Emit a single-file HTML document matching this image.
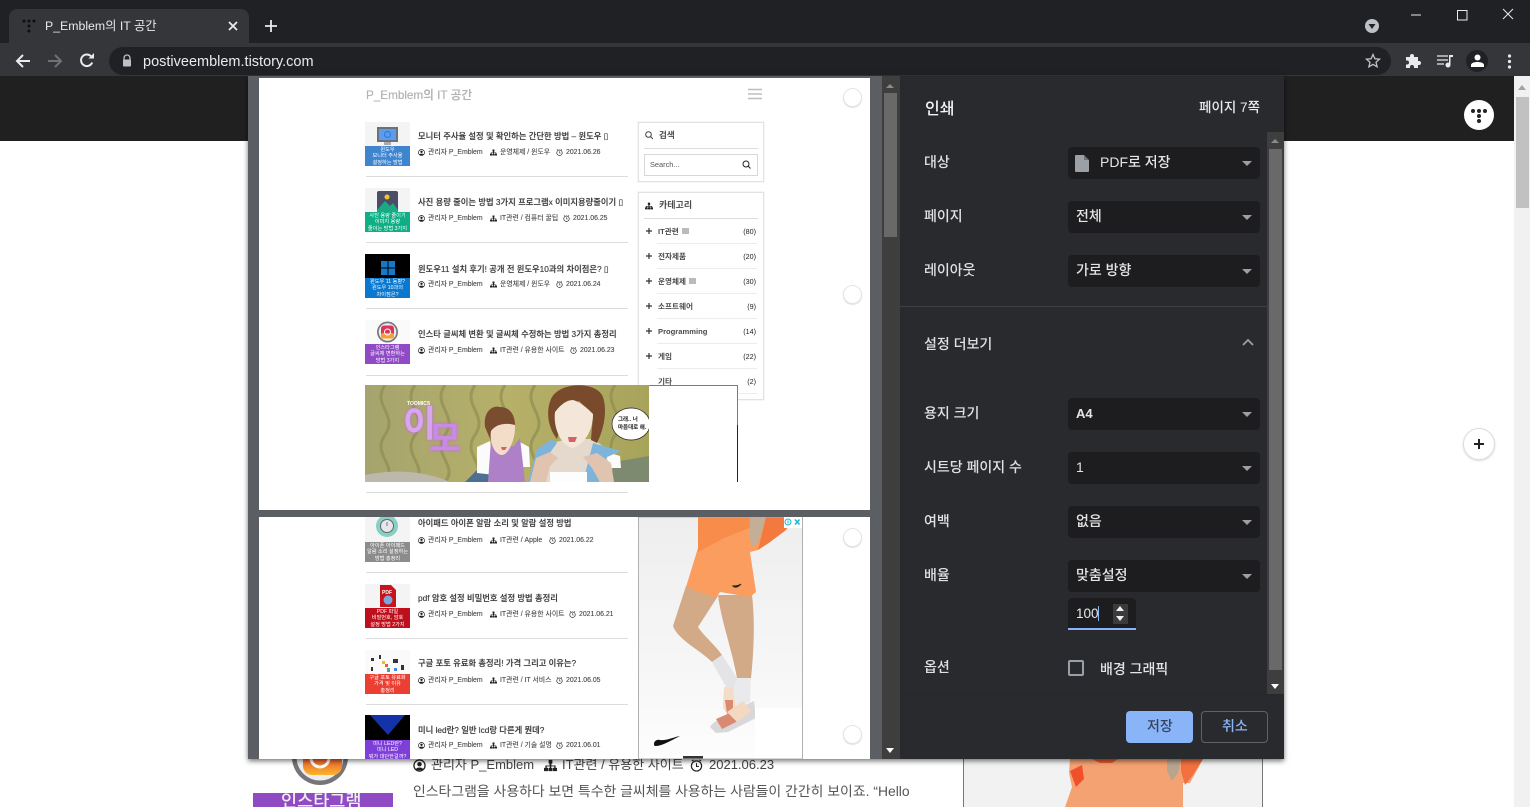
<!DOCTYPE html>
<html lang="ko"><head><meta charset="utf-8"><title>P_Emblem의 IT 공간</title>
<style>
html,body{margin:0;padding:0;width:1530px;height:807px;overflow:hidden;background:#fff}
body{position:relative;font-family:"Liberation Sans","Noto Sans CJK KR",sans-serif}
div,span,svg{position:absolute}
.t{white-space:nowrap;line-height:1}
.pt{font-size:8.3px;color:#3c3c3c;font-weight:500;height:10px;line-height:10px;left:418px;text-shadow:0 0 .5px #666}
.m{font-size:6.9px;color:#4a4a4a;height:8px;line-height:8px;margin-top:1px;text-shadow:0 0 .4px #888}
.mi{width:7px;height:7px;margin-top:1px}
.hr{background:#dcdcdc;height:1px;left:366px;width:262px}
.th{left:365px;width:45px;overflow:hidden;background:#f4f4f4}
.cap{left:0;width:45px;height:20px;color:#fff;font-size:5.200px;line-height:6.300px;text-align:center;padding-top:1px;box-sizing:border-box;white-space:nowrap}
.ci{font-size:7.600px;color:#4a4a4a;font-weight:700;left:658px;height:10px;line-height:10px;white-space:nowrap;margin-top:1px}
.cn{font-size:7.200px;color:#222;height:10px;line-height:10px;right:774px;white-space:nowrap;margin-top:1px}
.cl{left:657px;width:100px;height:1px;background:#ececec}
.pl{left:646px;width:6px;height:6px}
.rd{width:17px;height:17px;border-radius:50%;background:#fff;border:1px solid #e4e4e4;box-shadow:0 1px 1px rgba(0,0,0,.12)}
.lb{left:924px;font-size:14px;color:#e0e1e3;height:18px;line-height:18px;white-space:nowrap;margin-top:1px;font-weight:500}
.sel{left:1068px;width:192px;height:32px;background:#1d1d1f;border-radius:4px}
.sel b{position:absolute;left:8px;top:6px;font-weight:500;font-size:14px;color:#e3e4e6;line-height:18px;white-space:nowrap}
.sel i{position:absolute;left:174px;top:14px;width:0;height:0;border-left:5px solid transparent;border-right:5px solid transparent;border-top:5px solid #9aa0a6}
</style></head><body>

<svg width="0" height="0" style="position:absolute"><defs>
<symbol id="u" viewBox="0 0 14 14"><circle cx="7" cy="7" r="6" fill="none" stroke="#222" stroke-width="1.400"/><circle cx="7" cy="5.600" r="2.400" fill="#222"/><path d="M3 11c1-2.400 7-2.400 8 0v1H3z" fill="#222"/></symbol>
<symbol id="h" viewBox="0 0 14 14"><path d="M5 1h4v4H8v2h4.500v2.500H14V13H9.500V9.500H11V8H7.800v1.500H9V13H5V9.500h1.200V8H3v1.500h1.500V13H0V9.500h1.500V7H6V5H5z" fill="#222"/></symbol>
<symbol id="c" viewBox="0 0 14 14"><circle cx="7" cy="7.500" r="5.500" fill="none" stroke="#222" stroke-width="1.300"/><path d="M7 4.500V8h2.500M2 2l2-1M12 2l-2-1" fill="none" stroke="#222" stroke-width="1.100"/></symbol>
<symbol id="p" viewBox="0 0 6 6"><path d="M3 0v6M0 3h6" stroke="#333" stroke-width="1.200"/></symbol>
</defs></svg>

<!-- page behind -->
<div style="left:0;top:76px;width:1514px;height:65px;background:#202020"></div>
<div style="left:1514px;top:76px;width:16px;height:731px;background:#f1f1f1"></div>
<div style="left:1516px;top:97px;width:13px;height:111px;background:#c1c1c1"></div>
<div style="left:1518px;top:85px;width:0;height:0;border-left:4px solid transparent;border-right:4px solid transparent;border-bottom:5px solid #a3a3a3"></div>
<div style="left:1464px;top:100px;width:30px;height:30px;border-radius:50%;background:#fff"></div>
<svg style="left:1464px;top:100px" width="30" height="30"><g fill="#222"><circle cx="9" cy="11" r="2"/><circle cx="15" cy="11" r="2"/><circle cx="21" cy="11" r="2"/><circle cx="15" cy="16" r="2"/><circle cx="15" cy="21" r="2"/></g></svg>
<div style="left:1463px;top:428px;width:30px;height:30px;border-radius:50%;background:#fff;border:1px solid #ddd;box-shadow:0 1px 2px rgba(0,0,0,.15)"></div>
<svg style="left:1473px;top:438px" width="12" height="12"><path d="M6 1v10M1 6h10" stroke="#222" stroke-width="2"/></svg>

<!-- behind-dialog content -->
<svg style="left:285px;top:755px" width="70" height="38"><defs><linearGradient id="ig" x1="0" y1="0" x2="0" y2="1"><stop offset="0" stop-color="#b0328a"/><stop offset=".45" stop-color="#e8402f"/><stop offset="1" stop-color="#f9b62c"/></linearGradient></defs><circle cx="35" cy="2" r="28" fill="#75757b"/><circle cx="35" cy="2" r="23.500" fill="#ededed"/><rect x="18" y="-20" width="39" height="40" rx="9" fill="url(#ig)"/><circle cx="35" cy="3" r="9" fill="none" stroke="#fff" stroke-width="3"/></svg>
<div style="left:253px;top:793px;width:140px;height:14px;background:#8f4ac4;overflow:hidden"><span class="t" style="left:28px;top:0;font-size:17.500px;color:#eee;font-weight:500">인스타그램</span></div>
<svg style="left:413px;top:759px;width:13px;height:13px"><use href="#u"/></svg>
<span class="t" style="left:431px;top:758px;font-size:13px;color:#444">관리자 P_Emblem</span>
<svg style="left:544px;top:759px;width:13px;height:13px"><use href="#h"/></svg>
<span class="t" style="left:562px;top:758px;font-size:13px;color:#444">IT관련 / 유용한 사이트</span>
<svg style="left:690px;top:759px;width:13px;height:13px"><use href="#c"/></svg>
<span class="t" style="left:709px;top:758px;font-size:13px;color:#444">2021.06.23</span>
<span class="t" style="left:413px;top:785px;font-size:13.900px;color:#555">인스타그램을 사용하다 보면 특수한 글씨체를 사용하는 사람들이 간간히 보이죠. “Hello</span>
<div style="left:963px;top:755px;width:298px;height:60px;background:#f2f2f2;border-left:1px solid #777;border-right:1px solid #777"></div>
<svg style="left:1050px;top:759px" width="220" height="48"><path d="M20 0H153L140 24 133 24 133 48H15L22 28 19 14z" fill="#f5a272"/><path d="M20 12l12-6 2 14-8 8z" fill="#f0502a"/><path d="M117 0h14l-3 14-6 8-5-10z" fill="#b8a48f"/><path d="M131 0h22l-10 16-8 10-4-14z" fill="#f2713f"/><path d="M42 0h26l-6 4H50z" fill="#e85c30"/></svg>

<!-- top chrome -->
<div style="left:0;top:0;width:1530px;height:43px;background:#202124"></div>
<div style="left:0;top:43px;width:1530px;height:33px;background:#35363a"></div>
<div style="left:9px;top:9px;width:240px;height:34px;background:#35363a;border-radius:8px 8px 0 0"></div>
<svg style="left:21px;top:17px" width="16" height="16"><g fill="#0e0e0e"><circle cx="3" cy="4" r="1.500"/><circle cx="8" cy="4" r="1.500"/><circle cx="13" cy="4" r="1.500"/><circle cx="8" cy="9" r="1.500"/><circle cx="8" cy="14" r="1.500"/></g></svg>
<span class="t" style="left:45px;top:20px;font-size:12.300px;color:#e8eaed">P_Emblem의 IT 공간</span>
<svg style="left:227px;top:20px" width="12" height="12"><path d="M2 2l8 8M10 2l-8 8" stroke="#e8eaed" stroke-width="1.800"/></svg>
<svg style="left:264px;top:19px" width="14" height="14"><path d="M7 1v12M1 7h12" stroke="#e8eaed" stroke-width="1.800"/></svg>
<svg style="left:1365px;top:19px" width="14" height="14"><circle cx="7" cy="7" r="7" fill="#bdc1c6"/><path d="M3.500 5h7L7 10z" fill="#202124"/></svg>
<svg style="left:1405px;top:4px" width="115" height="22"><path d="M6 11h10" stroke="#e8eaed" stroke-width="1"/><path d="M52.500 6.500h9.500v9.500h-9.500z" fill="none" stroke="#e8eaed" stroke-width="1"/><path d="M98 5l10 10M108 5L98 15" stroke="#e8eaed" stroke-width="1"/></svg>

<svg style="left:14px;top:52px" width="18" height="18"><path d="M16 9H3M9 3L3 9l6 6" fill="none" stroke="#e8eaed" stroke-width="2"/></svg>
<svg style="left:46px;top:52px" width="18" height="18"><path d="M2 9h13M9 3l6 6-6 6" fill="none" stroke="#6f7175" stroke-width="2"/></svg>
<svg style="left:79px;top:52px" width="16" height="16"><path d="M13.200 10.500A5.800 5.800 0 1 1 12 4.200" fill="none" stroke="#e8eaed" stroke-width="2"/><path d="M9.500 6.500H15V1z" fill="#e8eaed"/></svg>
<div style="left:109px;top:47px;width:1282px;height:28px;border-radius:14px;background:#202124"></div>
<svg style="left:122px;top:54px" width="10" height="13"><path d="M2 6V4a3 3 0 0 1 6 0v2" fill="none" stroke="#bdc1c6" stroke-width="1.300"/><rect x="1" y="5.500" width="8" height="7" rx="1" fill="#bdc1c6"/></svg>
<span class="t" style="left:143px;top:55px;font-size:14.500px;color:#e8eaed">postiveemblem.tistory.com</span>
<svg style="left:1365px;top:53px" width="16" height="16"><path d="M8 1.500l1.900 4.300 4.600.4-3.500 3 1.100 4.600L8 11.400l-4.100 2.400L5 9.200l-3.500-3 4.600-.4z" fill="none" stroke="#bdc1c6" stroke-width="1.300"/></svg>
<svg style="left:1405px;top:53px" width="16" height="16"><path d="M1 4h4V3a2 2 0 0 1 4 0v1h4v4h1a2 2 0 0 1 0 4h-1v3H9v-1a2 2 0 0 0-4 0v1H1v-3.500h1a2 2 0 0 0 0-4H1z" fill="#e8eaed"/></svg>
<svg style="left:1437px;top:54px" width="16" height="14"><path d="M0 2h11M0 6h11M0 10h7" stroke="#e8eaed" stroke-width="1.300"/><path d="M12 1h4v2h-2.500v8a2.500 2.500 0 1 1-1.500-2.300z" fill="#e8eaed"/></svg>
<div style="left:1466px;top:50px;width:22px;height:22px;border-radius:50%;background:#202124"></div>
<svg style="left:1471px;top:54px" width="13" height="14"><circle cx="6.500" cy="3.500" r="3" fill="#fff"/><path d="M0 13v-2c0-4 13-4 13 0v2z" fill="#fff"/></svg>
<svg style="left:1507px;top:54px" width="5" height="15"><g fill="#e8eaed"><circle cx="2.500" cy="2" r="1.600"/><circle cx="2.500" cy="7.500" r="1.600"/><circle cx="2.500" cy="13" r="1.600"/></g></svg>

<!-- dialog -->
<div style="left:248px;top:76px;width:1036px;height:683px;background:#5b5e63;box-shadow:0 2px 5px rgba(0,0,0,.55);overflow:hidden"></div>

<!-- page 1 -->
<div style="left:259px;top:78px;width:611px;height:432px;background:#fff"></div>
<span class="t" style="left:366px;top:90px;font-size:11.700px;color:#b4b4b4;font-weight:500;text-shadow:0 0 .4px #aaa">P_Emblem의 IT 공간</span>
<svg style="left:748px;top:88px" width="14" height="12"><path d="M0 1.500h14M0 6h14M0 10.500h14" stroke="#bdbdbd" stroke-width="1.400"/></svg>

<div class="th" style="top:122px;height:44px"><svg style="left:0;top:0" width="45" height="24"><rect x="12" y="5" width="21" height="15" fill="#6b7178"/><rect x="14" y="7" width="17" height="11" fill="#5b9bf0"/><circle cx="22.500" cy="12.500" r="3" fill="none" stroke="#2f78d0"/><rect x="19" y="20" width="7" height="3" fill="#aaa"/></svg><div class="cap" style="top:24px;background:#3f84cf">윈도우<br>모니터 주사율<br>설정하는 방법</div></div>
<span class="t pt" style="top:131px">모니터 주사율 설정 및 확인하는 간단한 방법 – 윈도우 ▯</span>
<svg class="mi" style="left:418px;top:148px"><use href="#u"/></svg><span class="t m" style="left:428px;top:148px">관리자 P_Emblem</span>
<svg class="mi" style="left:490px;top:148px"><use href="#h"/></svg><span class="t m" style="left:500px;top:148px">운영체제 / 윈도우</span>
<svg class="mi" style="left:556px;top:148px"><use href="#c"/></svg><span class="t m" style="left:566px;top:148px">2021.06.26</span>
<div class="hr" style="top:176px"></div>

<div class="th" style="top:188px;height:44px"><svg style="left:0;top:0" width="45" height="24"><rect x="12" y="3" width="21" height="21" rx="2" fill="#4a4f66"/><circle cx="22" cy="9" r="2.500" fill="#f5c330"/><path d="M12 22l8-9 5 5 3-3 5 7v2H12z" fill="#19a985"/></svg><div class="cap" style="top:24px;background:#0fae85">사진 용량 줄이기<br>이미지 용량<br>줄이는 방법 3가지</div></div>
<span class="t pt" style="top:197px">사진 용량 줄이는 방법 3가지 프로그램x 이미지용량줄이기 ▯</span>
<svg class="mi" style="left:418px;top:214px"><use href="#u"/></svg><span class="t m" style="left:428px;top:214px">관리자 P_Emblem</span>
<svg class="mi" style="left:490px;top:214px"><use href="#h"/></svg><span class="t m" style="left:500px;top:214px">IT관련 / 컴퓨터 꿀팁</span>
<svg class="mi" style="left:563px;top:214px"><use href="#c"/></svg><span class="t m" style="left:573px;top:214px">2021.06.25</span>
<div class="hr" style="top:242px"></div>

<div class="th" style="top:254px;height:44px;background:#000"><svg style="left:0;top:0" width="45" height="24"><g fill="#1479c9"><rect x="16" y="7" width="6.500" height="6.500"/><rect x="23.500" y="7" width="6.500" height="6.500"/><rect x="16" y="14.500" width="6.500" height="6.500"/><rect x="23.500" y="14.500" width="6.500" height="6.500"/></g></svg><div class="cap" style="top:24px;background:#0a78cf">윈도우 11 동향?<br>윈도우 10과의<br>차이점은?</div></div>
<span class="t pt" style="top:264px">윈도우11 설치 후기! 공개 전 윈도우10과의 차이점은? ▯</span>
<svg class="mi" style="left:418px;top:280px"><use href="#u"/></svg><span class="t m" style="left:428px;top:280px">관리자 P_Emblem</span>
<svg class="mi" style="left:490px;top:280px"><use href="#h"/></svg><span class="t m" style="left:500px;top:280px">운영체제 / 윈도우</span>
<svg class="mi" style="left:556px;top:280px"><use href="#c"/></svg><span class="t m" style="left:566px;top:280px">2021.06.24</span>
<div class="hr" style="top:308px"></div>

<div class="th" style="top:320px;height:44px;background:#fafafa"><svg style="left:0;top:0" width="45" height="24"><circle cx="22.500" cy="12" r="10.500" fill="#777"/><circle cx="22.500" cy="12" r="8.800" fill="#eee"/><rect x="16" y="5.500" width="13" height="13" rx="3" fill="#d8365e"/><rect x="16" y="13" width="13" height="5.500" rx="2" fill="#f5a030"/><circle cx="22.500" cy="12" r="3" fill="none" stroke="#fff"/></svg><div class="cap" style="top:24px;background:#8f4ac4">인스타그램<br>글씨체 변환하는<br>방법 3가지</div></div>
<span class="t pt" style="top:329px">인스타 글씨체 변환 및 글씨체 수정하는 방법 3가지 총정리</span>
<svg class="mi" style="left:418px;top:346px"><use href="#u"/></svg><span class="t m" style="left:428px;top:346px">관리자 P_Emblem</span>
<svg class="mi" style="left:490px;top:346px"><use href="#h"/></svg><span class="t m" style="left:500px;top:346px">IT관련 / 유용한 사이트</span>
<svg class="mi" style="left:570px;top:346px"><use href="#c"/></svg><span class="t m" style="left:580px;top:346px">2021.06.23</span>
<div class="hr" style="top:375px"></div>

<!-- sidebar page 1 -->
<div style="left:638px;top:122px;width:124px;height:58px;border:1px solid #e2e2e2;box-shadow:0 0 0 .5px #eee"></div>
<svg style="left:645px;top:131px" width="8" height="9"><circle cx="3.500" cy="3.500" r="2.800" fill="none" stroke="#444" stroke-width="1"/><path d="M5.500 5.500L8 8" stroke="#444"/></svg>
<span class="t" style="left:659px;top:131px;font-size:8.500px;color:#444;font-weight:500;text-shadow:0 0 .4px #666">검색</span>
<div style="left:644px;top:148px;width:114px;height:1px;background:#ddd"></div>
<div style="left:644px;top:154px;width:112px;height:20px;border:1px solid #d8d8d8"></div>
<span class="t" style="left:650px;top:161px;font-size:7.400px;color:#555">Search...</span>
<svg style="left:742px;top:160px" width="9" height="9"><circle cx="4" cy="4" r="3" fill="none" stroke="#222" stroke-width="1"/><path d="M6 6l2.500 2.500" stroke="#222"/></svg>

<div style="left:638px;top:192px;width:124px;height:206px;border:1px solid #e2e2e2;box-shadow:0 0 0 .5px #eee"></div>
<svg style="left:645px;top:202px;width:8px;height:8px"><use href="#h"/></svg>
<span class="t" style="left:659px;top:201px;font-size:9px;color:#444;font-weight:500;text-shadow:0 0 .4px #666">카테고리</span>
<div style="left:644px;top:218px;width:114px;height:1px;background:#ddd"></div>
<svg class="pl" style="top:228px"><use href="#p"/></svg><span class="ci" style="top:226px">IT관련</span><div style="left:682px;top:228px;width:7px;height:6px;background:#bbb"></div><span class="cn" style="top:226px">(80)</span><div class="cl" style="top:243px"></div>
<svg class="pl" style="top:253px"><use href="#p"/></svg><span class="ci" style="top:251px">전자제품</span><span class="cn" style="top:251px">(20)</span><div class="cl" style="top:268px"></div>
<svg class="pl" style="top:278px"><use href="#p"/></svg><span class="ci" style="top:276px">운영체제</span><div style="left:689px;top:278px;width:7px;height:6px;background:#bbb"></div><span class="cn" style="top:276px">(30)</span><div class="cl" style="top:293px"></div>
<svg class="pl" style="top:303px"><use href="#p"/></svg><span class="ci" style="top:301px">소프트웨어</span><span class="cn" style="top:301px">(9)</span><div class="cl" style="top:318px"></div>
<svg class="pl" style="top:328px"><use href="#p"/></svg><span class="ci" style="top:326px">Programming</span><span class="cn" style="top:326px">(14)</span><div class="cl" style="top:343px"></div>
<svg class="pl" style="top:353px"><use href="#p"/></svg><span class="ci" style="top:351px">게임</span><span class="cn" style="top:351px">(22)</span><div class="cl" style="top:368px"></div>
<span class="ci" style="top:376px">기타</span><span class="cn" style="top:376px">(2)</span><div class="cl" style="top:393px"></div>

<!-- comic -->
<svg style="left:365px;top:385px" width="373" height="97" viewBox="0 0 373 97">
<defs><linearGradient id="o" x1="0" y1="0" x2="1" y2="0"><stop offset="0" stop-color="#a5a46e"/><stop offset=".5" stop-color="#b6b068"/><stop offset="1" stop-color="#a8a35a"/></linearGradient></defs>
<rect width="284" height="97" fill="url(#o)"/>
<g fill="none" stroke="#8f8d52" stroke-width="3" opacity=".7"><path d="M20 0c-14 20 14 30 0 50s14 30 0 47M50 0c-14 20 14 30 0 50s14 30 0 47M80 0c-14 20 14 30 0 50s14 30 0 47M110 0c-14 20 14 30 0 50s14 30 0 47M140 0c-14 20 14 30 0 50s14 30 0 47M170 0c-14 20 14 30 0 50s14 30 0 47M250 0c-14 20 14 30 0 50s14 30 0 47"/></g>
<path d="M0 97V90c30-6 60-4 85 7z" fill="#bdb8ac"/><path d="M245 97l4-20 35-6v26z" fill="#7d8a70"/><path d="M100 97l14-14 20 14z" fill="#4d7092"/>
<!-- left woman -->
<path d="M112 88l0-26 13-6 5 34z" fill="#fbfbfb"/><path d="M165 82l-1-20-11-6-3 26z" fill="#fbfbfb"/>
<path d="M123 97l3-42 9 8 14-2 6-8 5 44z" fill="#ae80c8"/>
<path d="M120 42c-2-16 8-22 15-20 10 0 16 8 15 22l-2 10-22 2z" fill="#7a4d30"/>
<path d="M126 46c6-8 16-8 24-6 1 12-6 30-13 30s-13-12-11-24z" fill="#f3dcc8"/>
<path d="M136 62h6l-2 3h-3z" fill="#d9606a"/>
<!-- right woman -->
<path d="M175 97l2-22 14-18 12-3 25 0 14 10 6 35z" fill="#e4d9cc"/>
<path d="M242 67l13 4 1 12-13 0z" fill="#fbfbfb"/>
<path d="M172 64l15-10 5 4-13 18-4 21h-12z" fill="#7fb4da"/>
<path d="M228 58l28 8-14 6-8 25h-16z" fill="#7fb4da"/>
<path d="M185 87h37v10h-37z" fill="#fdfdfd"/>
<path d="M165 97l6-24 14-6 8 6-8 8-4 16z" fill="#e0c4b0"/><path d="M218 72l14-4 14 10 3 19h-14l-8-14z" fill="#e0c4b0"/>
<path d="M192 54c-8-10-12-26-6-40 8-18 46-18 52-2 4 12 2 30-6 46l-6-3 2-25-14-14-14 8-4 16z" fill="#7a4a2c"/>
<path d="M190 27c6-8 12-12 18-12 8 2 16 10 20 14 0 16-8 30-20 34-12-2-20-20-18-36z" fill="#f4e7da"/>
<path d="M203 52h9l-2 5h-6z" fill="#d9606a"/>
<ellipse cx="266" cy="39" rx="19" ry="16" fill="#fff" stroke="#222" stroke-width=".7"/>
<rect x="284" y="0" width="88" height="97" fill="#fff"/>
<path d="M284 .5h88.500V40" fill="none" stroke="#8a8040" stroke-width="1"/><path d="M372.500 40V97" stroke="#222" stroke-width="1"/>
</svg>
<span class="t" style="left:407px;top:402px;font-size:5px;color:#fff;font-weight:700">TOOMICS</span>
<span class="t" style="left:403px;top:406px;font-size:36px;color:#d9a5ee;font-weight:700;text-shadow:0 0 3px #c26bea">이</span>
<span class="t" style="left:429px;top:422px;font-size:35px;color:#c98ae6;font-weight:700;text-shadow:0 0 3px #c26bea">모</span>
<span class="t" style="left:618px;top:416px;font-size:5.500px;color:#222;font-weight:700;line-height:8px">그래.. 너<br>마음대로 해.</span>
<div class="hr" style="top:492px"></div>

<div style="left:259px;top:517px;width:611px;height:242px;background:#fff;overflow:hidden"></div>

<!-- page 2 rows -->
<div class="th" style="top:517px;height:45px;background:#f4f4f4"><svg style="left:0;top:0" width="45" height="25"><circle cx="22" cy="9" r="11" fill="#86d0c6"/><circle cx="22" cy="9" r="6.500" fill="#e5e7ea" stroke="#666"/><path d="M22 5v4" stroke="#777"/></svg><div class="cap" style="top:25px;background:#8c8c8c">아이폰 아이패드<br>알람 소리 설정하는<br>방법 총정리</div></div>
<span class="t pt" style="top:518px">아이패드 아이폰 알람 소리 및 알람 설정 방법</span>
<svg class="mi" style="left:418px;top:536px"><use href="#u"/></svg><span class="t m" style="left:428px;top:536px">관리자 P_Emblem</span>
<svg class="mi" style="left:490px;top:536px"><use href="#h"/></svg><span class="t m" style="left:500px;top:536px">IT관련 / Apple</span>
<svg class="mi" style="left:549px;top:536px"><use href="#c"/></svg><span class="t m" style="left:559px;top:536px">2021.06.22</span>
<div class="hr" style="top:572px"></div>

<div class="th" style="top:584px;height:44px"><svg style="left:0;top:0" width="45" height="24"><path d="M15 1h11l5 5v17H15z" fill="#c8141c"/><circle cx="23" cy="16" r="4.500" fill="#7ba7dc"/></svg><span class="t" style="left:17px;top:7px;font-size:5px;color:#fff;font-weight:700">PDF</span><div class="cap" style="top:24px;background:#c00f1c">PDF 파일<br>비밀번호, 암호<br>설정 방법 2가지</div></div>
<span class="t pt" style="top:593px">pdf 암호 설정 비밀번호 설정 방법 총정리</span>
<svg class="mi" style="left:418px;top:610px"><use href="#u"/></svg><span class="t m" style="left:428px;top:610px">관리자 P_Emblem</span>
<svg class="mi" style="left:490px;top:610px"><use href="#h"/></svg><span class="t m" style="left:500px;top:610px">IT관련 / 유용한 사이트</span>
<svg class="mi" style="left:569px;top:610px"><use href="#c"/></svg><span class="t m" style="left:579px;top:610px">2021.06.21</span>
<div class="hr" style="top:638px"></div>

<div class="th" style="top:650px;height:44px;background:#fafafa"><svg style="left:0;top:0" width="45" height="24"><g fill="#333"><rect x="6" y="8" width="3" height="3"/><rect x="14" y="5" width="2" height="4"/><rect x="28" y="9" width="5" height="4"/><rect x="36" y="15" width="3" height="5"/><rect x="6" y="17" width="2" height="4"/></g><rect x="20" y="14" width="3" height="3" fill="#e54"/><rect x="22" y="18" width="3" height="4" fill="#4a8"/><rect x="17" y="11" width="3" height="3" fill="#fb0"/><rect x="29" y="18" width="3" height="3" fill="#48d"/></svg><div class="cap" style="top:24px;background:#ec3f33">구글 포토 유료화<br>가격 및 이유<br>총정리</div></div>
<span class="t pt" style="top:658px">구글 포토 유료화 총정리! 가격 그리고 이유는?</span>
<svg class="mi" style="left:418px;top:676px"><use href="#u"/></svg><span class="t m" style="left:428px;top:676px">관리자 P_Emblem</span>
<svg class="mi" style="left:490px;top:676px"><use href="#h"/></svg><span class="t m" style="left:500px;top:676px">IT관련 / IT 서비스</span>
<svg class="mi" style="left:556px;top:676px"><use href="#c"/></svg><span class="t m" style="left:566px;top:676px">2021.06.05</span>
<div class="hr" style="top:704px"></div>

<div class="th" style="top:715px;height:44px;background:#000"><svg style="left:0;top:0" width="45" height="26"><path d="M5 0h35L23 20z" fill="#1533a8"/></svg><div class="cap" style="top:25px;background:#7d3fd8">미니 LED란?<br>미니 LED<br>뭐가 대단한걸까?</div></div>
<span class="t pt" style="top:725px">미니 led란? 일반 lcd랑 다른게 뭔데?</span>
<svg class="mi" style="left:418px;top:741px"><use href="#u"/></svg><span class="t m" style="left:428px;top:741px">관리자 P_Emblem</span>
<svg class="mi" style="left:490px;top:741px"><use href="#h"/></svg><span class="t m" style="left:500px;top:741px">IT관련 / 기술 설명</span>
<svg class="mi" style="left:556px;top:741px"><use href="#c"/></svg><span class="t m" style="left:566px;top:741px">2021.06.01</span>

<!-- ad -->
<svg style="left:638px;top:517px" width="166" height="242" viewBox="638 517 166 242">
<defs><linearGradient id="bg" x1="0" y1="0" x2="0" y2="1"><stop offset="0" stop-color="#eeeeee"/><stop offset=".6" stop-color="#f6f6f6"/><stop offset="1" stop-color="#fdfdfd"/></linearGradient></defs>
<rect x="639" y="517" width="163" height="242" fill="url(#bg)"/>
<path d="M686 586L673 626 C678 640 700 650 712 662L722 655C715 645 703 635 698 627L718 596z" fill="#d2aa88"/>
<path d="M718 595C721 620 732 650 737 678H751C754 650 755 620 752 595z" fill="#d2aa88"/>
<path d="M712 662l10-7 15 23 1 12-12-3z" fill="#e4e4e6"/>
<path d="M724 687l13 1-1 20-7 8-6-8z" fill="#f3dcc8"/>
<path d="M725 700l8 0 0 10-6 4z" fill="#d98a70"/>
<path d="M737 678h14l-1 24-14 6-3-18z" fill="#eaeaec"/>
<path d="M710 727c4-8 40-24 44-26l2 17-28 14-12 1z" fill="#d8d8da"/>
<path d="M716 719l14-6 8 8-16 8z" fill="#d98a70"/>
<path d="M727 712l16-11 8 10-14 11z" fill="#f5d8c0"/>
<path d="M698 517L698 548 686 587 716 598 720 592 750 597 756 592 750 552 758 550 770 542 786 530 793 517z" fill="#fa9d5e"/>
<path d="M698 517h62l-6 9-30 12-26 14z" fill="#f88c4a"/>
<path d="M766 517l27 0-7 13-16 12-12 8z" fill="#f4793f"/>
<path d="M750 517h16l-7 24-7 6-3-12z" fill="#c3ae98"/>
<path d="M733 586c3 0 6 0 8-2-3 3-6 4-8 2z" stroke="#222" fill="#222"/>
<path d="M654 744c0-3 3-5 6-4 6 1 14-3 20-4-8 4-18 10-24 10-2 0-2-1-2-2z" fill="#111"/>
<rect x="755" y="708" width="47" height="51" fill="#fff"/>
<rect x="683" y="756" width="20" height="3" fill="#333"/>
<rect x="638.500" y="517" width="164" height="242" fill="none" stroke="#b0b0b0"/>
<rect x="784" y="517" width="18" height="11" fill="#fff"/>
<circle cx="788" cy="522" r="3" fill="none" stroke="#17b6d4"/><rect x="787.500" y="520.500" width="1" height="3" fill="#17b6d4"/>
<path d="M795 519.500l4.500 5M799.500 519.500l-4.500 5" stroke="#17b6d4" stroke-width="1.500"/>
</svg>

<div class="rd" style="left:843px;top:88px"></div>
<div class="rd" style="left:843px;top:285px"></div>
<div class="rd" style="left:843px;top:528px"></div>
<div class="rd" style="left:843px;top:725px"></div>

<!-- preview scrollbar -->
<div style="left:882px;top:76px;width:18px;height:683px;background:#3e3e3e"></div>
<div style="left:884px;top:93px;width:13px;height:144px;background:#696969"></div>
<div style="left:886px;top:84px;width:0;height:0;border-left:4px solid transparent;border-right:4px solid transparent;border-bottom:4px solid #8a8a8a"></div>
<div style="left:886px;top:748px;width:0;height:0;border-left:4px solid transparent;border-right:4px solid transparent;border-top:5px solid #fff"></div>

<!-- sidebar -->
<div style="left:900px;top:76px;width:384px;height:683px;background:#292a2d"></div>
<span class="t" style="left:925px;top:102px;font-size:16px;color:#f1f3f4;font-weight:500">인쇄</span>
<span class="t" style="right:270px;top:101px;font-size:13.500px;color:#e8eaed;font-weight:500">페이지 7쪽</span>

<span class="lb" style="top:152px">대상</span>
<div class="sel" style="top:147px"><svg style="left:7px;top:8px" width="14" height="17"><path d="M1 0h8l5 5v11a1 1 0 0 1-1 1H1a1 1 0 0 1-1-1V1a1 1 0 0 1 1-1z" fill="#9aa0a6"/><path d="M9 0v5h5z" fill="#1d1d1f" opacity=".35"/></svg><b style="left:32px">PDF로 저장</b><i></i></div>
<span class="lb" style="top:206px">페이지</span>
<div class="sel" style="top:201px"><b>전체</b><i></i></div>
<span class="lb" style="top:260px">레이아웃</span>
<div class="sel" style="top:255px"><b>가로 방향</b><i></i></div>
<div style="left:900px;top:306px;width:367px;height:1px;background:#3f4044"></div>
<span class="lb" style="top:334px">설정 더보기</span>
<svg style="left:1242px;top:338px" width="12" height="9"><path d="M1 7l5-5 5 5" fill="none" stroke="#9aa0a6" stroke-width="1.800"/></svg>

<span class="lb" style="top:403px">용지 크기</span>
<div class="sel" style="top:398px"><b style="font-weight:700;font-size:13px;top:7px">A4</b><i></i></div>
<span class="lb" style="top:457px">시트당 페이지 수</span>
<div class="sel" style="top:452px"><b>1</b><i></i></div>
<span class="lb" style="top:511px">여백</span>
<div class="sel" style="top:506px"><b>없음</b><i></i></div>
<span class="lb" style="top:565px">배율</span>
<div class="sel" style="top:560px"><b>맞춤설정</b><i></i></div>
<div style="left:1068px;top:598px;width:68px;height:32px;background:#1d1d1f;border-radius:4px 4px 0 0"></div>
<div style="left:1068px;top:628px;width:68px;height:2px;background:#8ab4f8"></div>
<span class="t" style="left:1076px;top:607px;font-size:13.500px;color:#e8eaed">100</span>
<div style="left:1098px;top:606px;width:1px;height:15px;background:#8ab4f8"></div>
<div style="left:1113px;top:604px;width:15px;height:20px;background:#3b3b3b"></div>
<div style="left:1116px;top:606px;width:0;height:0;border-left:4px solid transparent;border-right:4px solid transparent;border-bottom:5px solid #f0f0f0"></div>
<div style="left:1116px;top:616px;width:0;height:0;border-left:4px solid transparent;border-right:4px solid transparent;border-top:5px solid #f0f0f0"></div>
<span class="lb" style="top:657px">옵션</span>
<div style="left:1068px;top:660px;width:12px;height:12px;border:2px solid #9aa0a6;border-radius:2px"></div>
<span class="t" style="left:1100px;top:662px;font-size:14px;color:#e3e4e6;font-weight:500">배경 그래픽</span>

<!-- sidebar scrollbar -->
<div style="left:1267px;top:132px;width:17px;height:563px;background:#3e3e3e"></div>
<div style="left:1269px;top:149px;width:13px;height:521px;background:#696969"></div>
<div style="left:1271px;top:139px;width:0;height:0;border-left:4px solid transparent;border-right:4px solid transparent;border-bottom:4px solid #8a8a8a"></div>
<div style="left:1271px;top:684px;width:0;height:0;border-left:4px solid transparent;border-right:4px solid transparent;border-top:5px solid #fff"></div>

<div style="left:900px;top:694px;width:384px;height:1px;background:#26272a"></div>
<div style="left:1126px;top:711px;width:67px;height:32px;background:#8ab4f8;border-radius:4px"></div>
<span class="t" style="left:1147px;top:719px;font-size:14px;color:#33435c;font-weight:500">저장</span>
<div style="left:1201px;top:711px;width:65px;height:30px;border:1px solid #5f6368;border-radius:4px"></div>
<span class="t" style="left:1222px;top:719px;font-size:14px;color:#8ab4f8;font-weight:500">취소</span>

</body></html>
